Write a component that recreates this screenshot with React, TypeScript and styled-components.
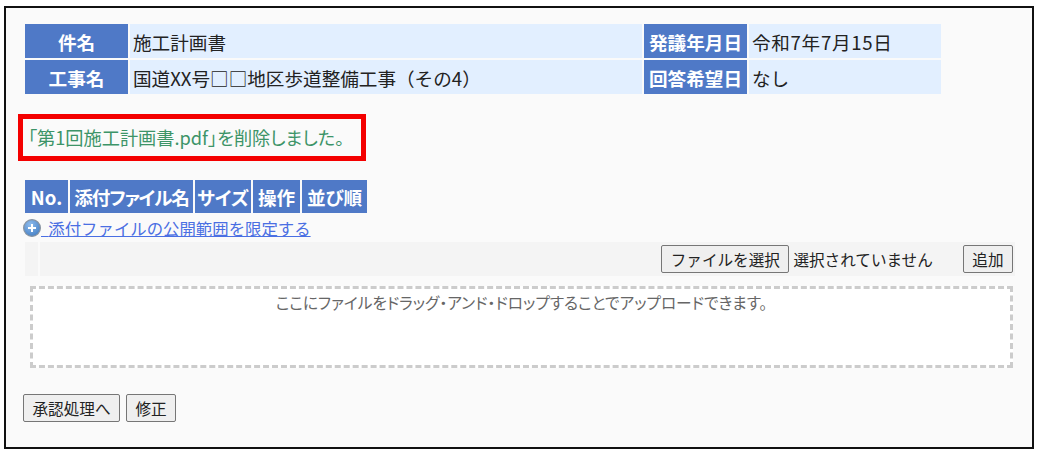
import React from 'react';
import styled, { createGlobalStyle } from 'styled-components';

const Global = createGlobalStyle`
  html, body { margin: 0; padding: 0; background: #fff; }
  body {
    font-family: "Noto Sans CJK JP", "Noto Sans", sans-serif;
    color: #222;
  }
`;

const Frame = styled.div`
  box-sizing: border-box;
  width: 1030px;
  height: 443px;
  margin: 6px 0 0 4px;
  padding: 16px 18px 0 17px;
  background: #fafafa;
  border: 2px solid #111;
`;

const InfoGrid = styled.div`
  display: grid;
  grid-template-columns: 103px 512px 103px 192px;
  grid-auto-rows: 34px;
  gap: 2px;
  margin-left: 2px;
`;

const HeadCell = styled.div`
  display: flex;
  align-items: center;
  justify-content: center;
  background: #4f79c7;
  color: #fff;
  font-size: 18.6px;
  font-weight: 700;
  white-space: nowrap;
`;

const ValueCell = styled.div<{ $spacing?: number }>`
  display: flex;
  align-items: center;
  padding-left: 3px;
  background: #e2efff;
  color: #222;
  font-size: 18.6px;
  letter-spacing: ${p => p.$spacing ?? 0}px;
  white-space: nowrap;
`;

const Message = styled.div`
  box-sizing: border-box;
  width: 348px;
  height: 47px;
  margin: 20px 0 0 -5px;
  padding: 0 0 2px 5px;
  display: flex;
  align-items: center;
  border: 5px solid #f40000;
  color: #3d9468;
  font-size: 18.2px;
  font-feature-settings: "palt";
  white-space: nowrap;
`;

const ColumnRow = styled.div`
  display: flex;
  gap: 2px;
  height: 33px;
  margin: 19px 0 0 2px;
`;

const ColumnHead = styled.div<{ $w: number; $spacing?: number }>`
  width: ${p => p.$w}px;
  display: flex;
  align-items: center;
  justify-content: center;
  background: #4f79c7;
  color: #fff;
  font-size: 18.6px;
  font-weight: 700;
  font-feature-settings: "palt";
  letter-spacing: ${p => p.$spacing ?? 0}px;
  white-space: nowrap;
`;

const LinkRow = styled.a`
  display: block;
  width: max-content;
  height: 28px;
  line-height: 28px;
  color: #4a6fe3;
  font-size: 16.4px;
  text-decoration: underline;
  text-underline-offset: 1px;
  margin-top: 1px;
  cursor: pointer;

  svg {
    vertical-align: -2px;
  }
`;

const UploadBar = styled.div`
  display: grid;
  grid-template-columns: 13px 1fr;
  gap: 2px;
  height: 34px;
  width: 990px;
  margin-left: 2px;
`;

const BarCell = styled.div`
  background: #f4f4f4;
`;

const BarControls = styled(BarCell)`
  display: flex;
  align-items: center;
  justify-content: flex-end;
  padding-right: 2px;
`;

const Button = styled.button`
  box-sizing: border-box;
  height: 28px;
  padding: 0 8.5px;
  background: #efefef;
  border: 1px solid #767676;
  border-radius: 2px;
  color: #222;
  font-family: inherit;
  font-size: 15.6px;
  white-space: nowrap;
  display: inline-flex;
  align-items: center;
`;

const NoFile = styled.span`
  font-size: 15.6px;
  color: #222;
  margin: 0 30px 0 4px;
  white-space: nowrap;
`;

const DropZone = styled.div`
  box-sizing: border-box;
  width: 983px;
  height: 82px;
  margin: 10px 0 0 7px;
  padding-top: 2px;
  background: #fff;
  border: 3px dashed #ccc;
  color: #666;
  font-size: 15.7px;
  font-feature-settings: "palt";
  text-align: center;
`;

const Actions = styled.div`
  display: flex;
  gap: 6px;
  margin-top: 26px;
`;

const PlusIcon = () => (
  <svg width="18" height="18" viewBox="0 0 18 18">
    <defs>
      <radialGradient id="orb" cx="0.4" cy="0.3" r="0.8">
        <stop offset="0" stopColor="#8fbcec" />
        <stop offset="1" stopColor="#3f7bc2" />
      </radialGradient>
    </defs>
    <circle cx="9" cy="9" r="8.4" fill="url(#orb)" stroke="#8a94a0" strokeWidth="1.2" />
    <path d="M5 9h8M9 5v8" stroke="#fff" strokeWidth="2" />
  </svg>
);

const columns: { label: string; w: number; spacing?: number }[] = [
  { label: 'No.', w: 43 },
  { label: '添付ファイル名', w: 123, spacing: -1.1 },
  { label: 'サイズ', w: 56 },
  { label: '操作', w: 47 },
  { label: '並び順', w: 65 },
];

export default function App() {
  return (
    <>
      <Global />
      <Frame>
        <InfoGrid>
          <HeadCell>件名</HeadCell>
          <ValueCell>施工計画書</ValueCell>
          <HeadCell>発議年月日</HeadCell>
          <ValueCell $spacing={0.7}>令和7年7月15日</ValueCell>
          <HeadCell>工事名</HeadCell>
          <ValueCell>国道XX号□□地区歩道整備工事（その4）</ValueCell>
          <HeadCell>回答希望日</HeadCell>
          <ValueCell>なし</ValueCell>
        </InfoGrid>

        <Message>「第1回施工計画書.pdf」を削除しました。</Message>

        <ColumnRow>
          {columns.map(c => (
            <ColumnHead key={c.label} $w={c.w} $spacing={c.spacing}>{c.label}</ColumnHead>
          ))}
        </ColumnRow>

        <LinkRow>
          <PlusIcon />
          {'\u00a0\u00a0'}添付ファイルの公開範囲を限定する
        </LinkRow>

        <UploadBar>
          <BarCell />
          <BarControls>
            <Button>ファイルを選択</Button>
            <NoFile>選択されていません</NoFile>
            <Button>追加</Button>
          </BarControls>
        </UploadBar>

        <DropZone>ここにファイルをドラッグ・アンド・ドロップすることでアップロードできます。</DropZone>

        <Actions>
          <Button>承認処理へ</Button>
          <Button>修正</Button>
        </Actions>
      </Frame>
    </>
  );
}
